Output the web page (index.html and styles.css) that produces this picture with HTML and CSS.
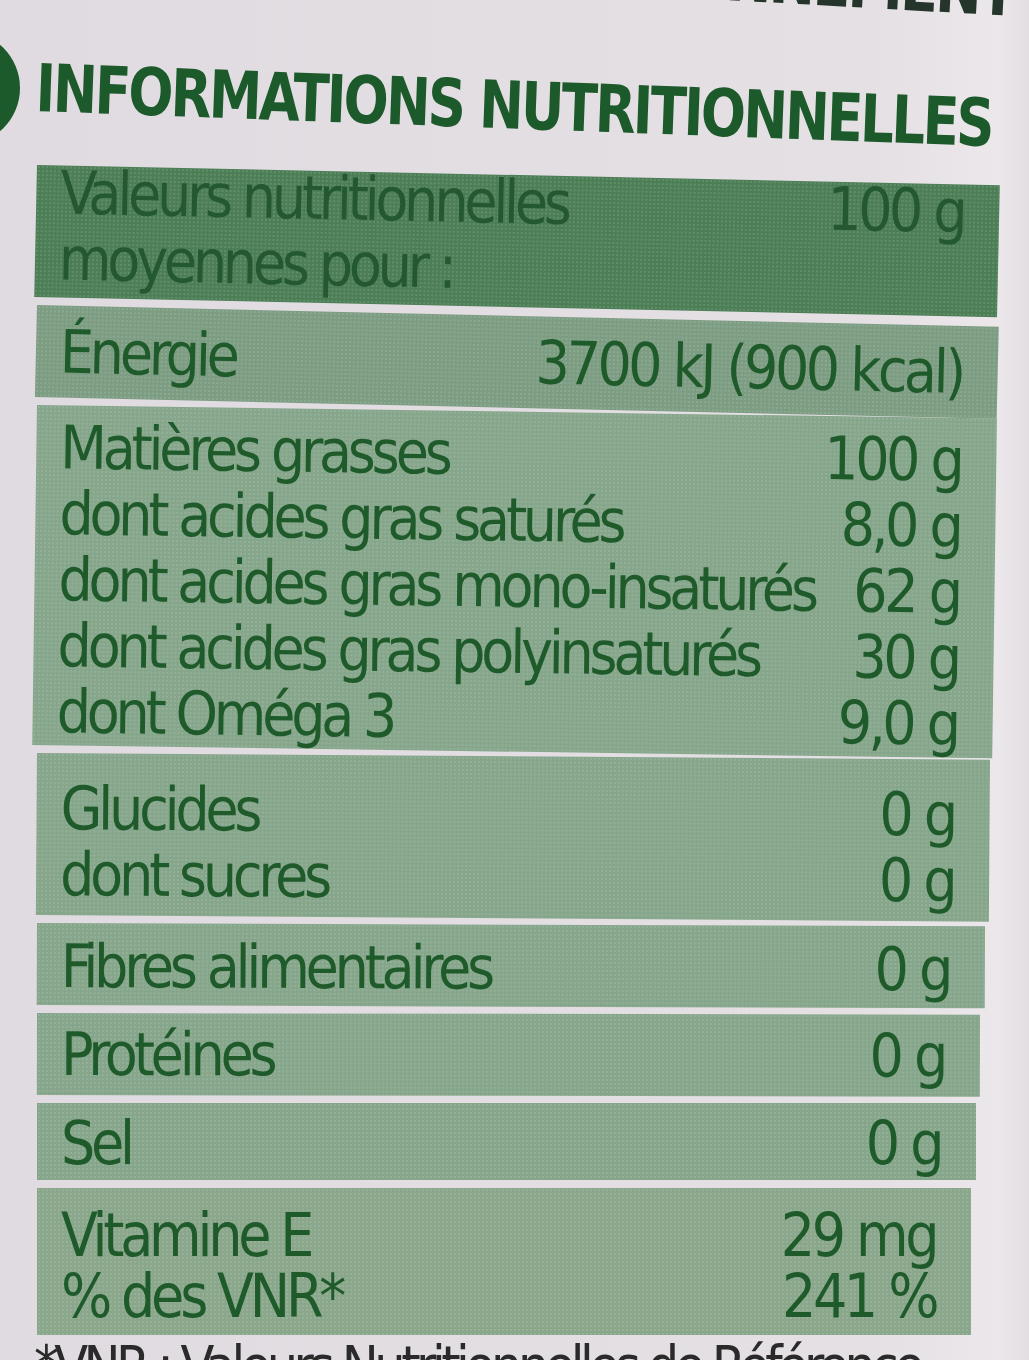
FILE: index.html
```html
<!DOCTYPE html>
<html lang="fr">
<head>
<meta charset="utf-8">
<title>Informations nutritionnelles</title>
<link rel="stylesheet" href="styles.css">
</head>
<body>
<div class="page">
  <div class="top-cut"><span class="top-text">ENVIRONNEMENT</span></div>
  <div class="title-row">
    <div class="bullet"></div>
    <h1 class="title">INFORMATIONS NUTRITIONNELLES</h1>
  </div>
  <div class="table">
    <div class="group head">
      <div class="line"><span class="label">Valeurs nutritionnelles</span><span class="val">100 g</span></div>
      <div class="line"><span class="label">moyennes pour :</span><span class="val"></span></div>
    </div>
    <div class="group energy">
      <div class="line"><span class="label">Énergie</span><span class="val">3700 kJ (900 kcal)</span></div>
    </div>
    <div class="group fat">
      <div class="line"><span class="label">Matières grasses</span><span class="val">100 g</span></div>
      <div class="line"><span class="label">dont acides gras saturés</span><span class="val">8,0 g</span></div>
      <div class="line"><span class="label">dont acides gras mono-insaturés</span><span class="val">62 g</span></div>
      <div class="line"><span class="label">dont acides gras polyinsaturés</span><span class="val">30 g</span></div>
      <div class="line"><span class="label">dont Oméga 3</span><span class="val">9,0 g</span></div>
    </div>
    <div class="group carbs">
      <div class="line"><span class="label">Glucides</span><span class="val">0 g</span></div>
      <div class="line"><span class="label">dont sucres</span><span class="val">0 g</span></div>
    </div>
    <div class="group fibres">
      <div class="line"><span class="label">Fibres alimentaires</span><span class="val">0 g</span></div>
    </div>
    <div class="group prot">
      <div class="line"><span class="label">Protéines</span><span class="val">0 g</span></div>
    </div>
    <div class="group salt">
      <div class="line"><span class="label">Sel</span><span class="val">0 g</span></div>
    </div>
    <div class="group vit">
      <div class="line"><span class="label">Vitamine E</span><span class="val">29 mg</span></div>
      <div class="line"><span class="label">% des VNR*</span><span class="val">241 %</span></div>
    </div>
  </div>
  <div class="foot">*VNR : Valeurs Nutritionnelles de Référence</div>
</div>
</body>
</html>
```

FILE: styles.css
```css
html, body {
  margin: 0;
  padding: 0;
}
body {
  background: linear-gradient(90deg, #e0dbe0 0%, #e4e0e4 85%, #ebe7eb 97%, #e2dee2 100%);
  width: 1029px;
  height: 1360px;
  overflow: hidden;
  font-family: "DejaVu Sans Condensed", "DejaVu Sans", sans-serif;
  color: #1f5a2b;
}
.page {
  width: 1029px;
  height: 1360px;
  overflow: hidden;
}
.top-cut {
  height: 22px;
  overflow: hidden;
  text-align: right;
  padding-right: 16px;
}
.top-text {
  display: inline-block;
  font-size: 62px;
  font-weight: bold;
  line-height: 1;
  letter-spacing: -3px;
  margin-top: -36px;
  color: #26352b;
  transform: rotate(3.2deg);
  transform-origin: right 56px;
}
.title-row {
  display: flex;
  align-items: flex-start;
  height: 143px;
}
.bullet {
  flex: none;
  width: 114px;
  height: 114px;
  border-radius: 50%;
  background: #1d5a2b;
  margin-left: -94px;
  margin-right: 16px;
  margin-top: 9px;
}
.title {
  margin: 34px 0 0 0;
  font-size: 66px;
  line-height: 1;
  font-weight: bold;
  letter-spacing: -3px;
  color: #1d5a2b;
  white-space: nowrap;
  transform: rotate(2.1deg) scaleX(0.895);
  transform-origin: left 30px;
}
.table {
  margin-left: 37px;
  width: 963px;
  display: flex;
  flex-direction: column;
  gap: 8px;
}
.group {
  background-color: #86a68b;
  background-image: radial-gradient(rgba(235, 245, 235, 0.13) 0.9px, transparent 1.3px);
  background-size: 4px 4px;
  padding: 0 35px 0 24px;
  display: flex;
  flex-direction: column;
  transform-origin: left top;
}
.line {
  display: flex;
  justify-content: space-between;
  align-items: baseline;
  font-size: 60px;
  line-height: 66px;
  letter-spacing: -4.2px;
  white-space: nowrap;
}
.val {
  letter-spacing: -3.5px;
}
.head {
  background-color: #4c7e56;
  color: #235830;
  height: 132px;
  transform: rotate(1.2deg);
}
.head .line:first-child {
  margin-top: -6px;
}
.energy {
  background-color: #7d9d83;
  padding-top: 13px;
  padding-bottom: 13px;
  margin-right: 1px;
  transform: rotate(1.3deg);
}
.fat {
  padding-top: 9px;
  padding-bottom: 1px;
  margin-right: 3px;
  transform: rotate(0.8deg);
}
.carbs {
  padding-top: 22px;
  padding-bottom: 8px;
  margin-right: 10px;
  transform: rotate(0.4deg);
}
.fibres {
  padding-top: 10px;
  padding-bottom: 6px;
  margin-right: 15px;
  transform: rotate(0.2deg);
}
.prot {
  padding-top: 8px;
  padding-bottom: 8px;
  margin-right: 20px;
  transform: rotate(0.1deg);
}
.salt {
  padding-top: 7px;
  padding-bottom: 4px;
  margin-right: 24px;
}
.vit {
  background-color: #8aa78c;
  padding-top: 17px;
  padding-bottom: 8px;
  margin-right: 29px;
}
.vit .line {
  line-height: 61px;
}
.foot {
  margin-left: 34px;
  margin-top: 4px;
  font-size: 55px;
  line-height: 1;
  letter-spacing: -4.5px;
  color: #2a2a2a;
  white-space: nowrap;
}
```
